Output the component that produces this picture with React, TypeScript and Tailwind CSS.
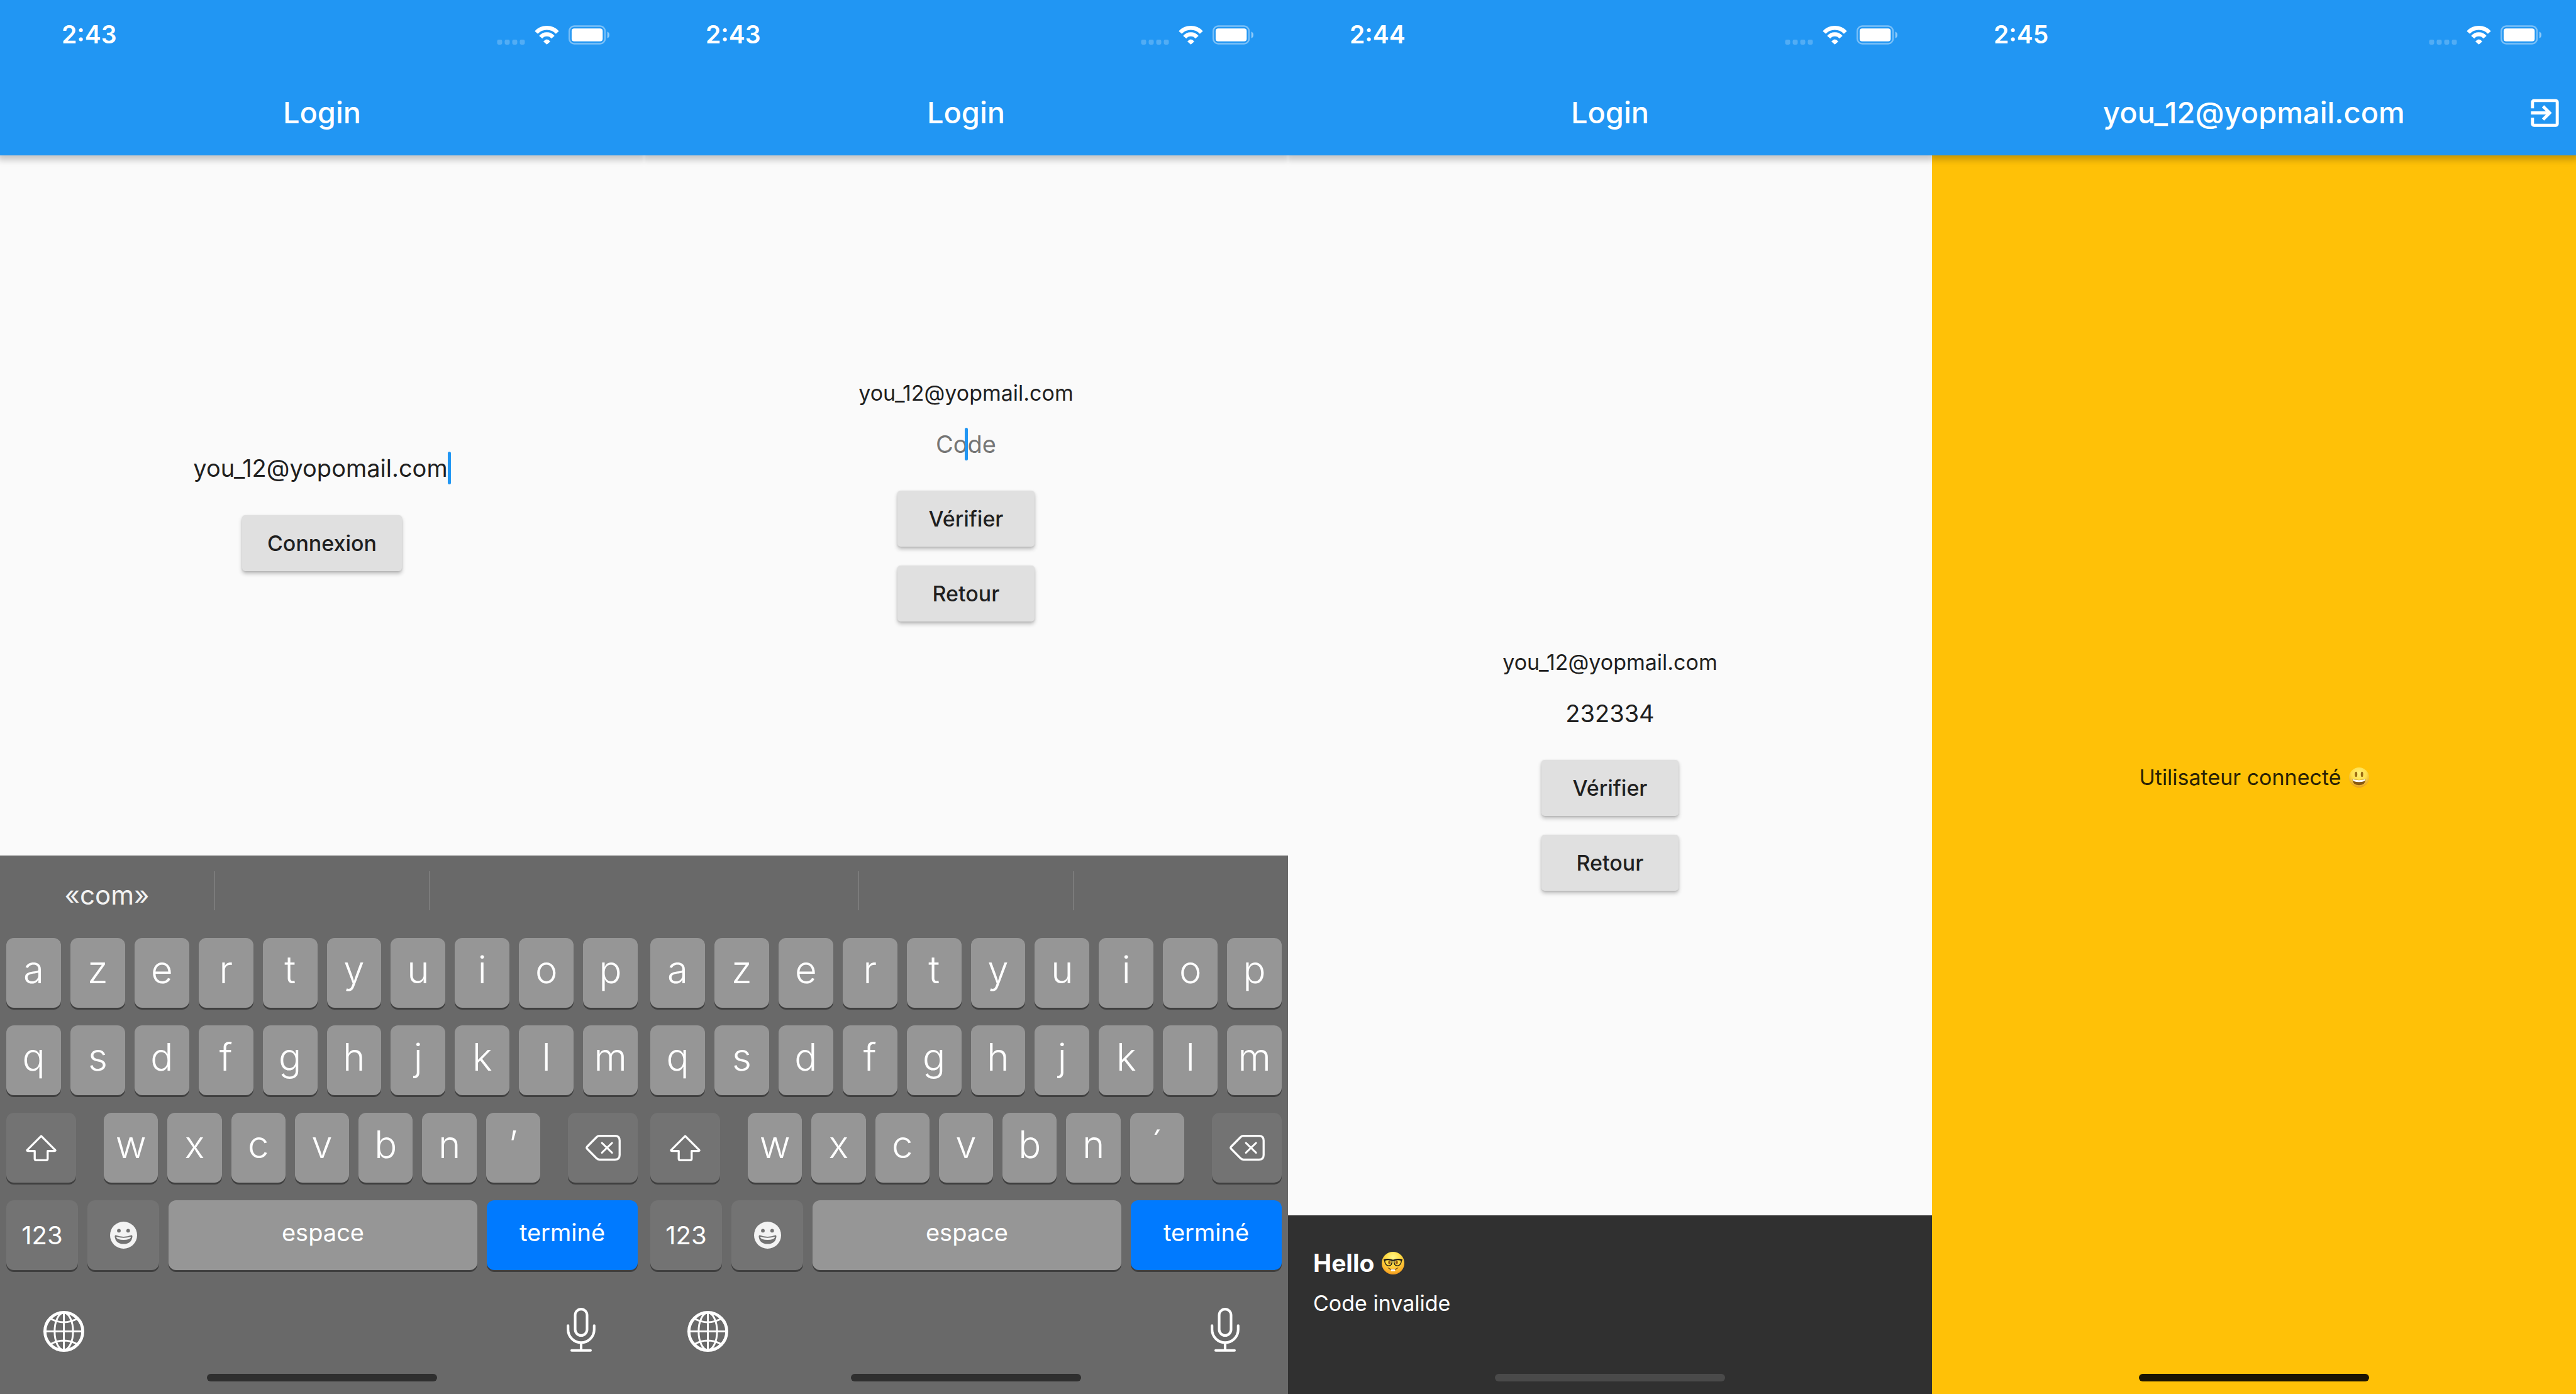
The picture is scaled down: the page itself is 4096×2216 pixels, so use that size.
import type { ReactNode } from "react";

function StatusIcons() {
  return (
    <div className="flex items-end gap-[15px]">
      <svg className="h-2 w-[45px]" viewBox="0 0 55 10" aria-hidden="true">
        <g fill="#fff" opacity="0.22">
          <rect x="0" width="10" height="10" rx="3" />
          <rect x="15" width="10" height="10" rx="3" />
          <rect x="30" width="10" height="10" rx="3" />
          <rect x="45" width="10" height="10" rx="3" />
        </g>
      </svg>
      <svg className="h-[30px] w-[39px]" viewBox="0 0 47.6 36.5" aria-hidden="true">
        <g fill="none" stroke="#fff" strokeWidth="8">
          <path d="M3.3 12.9A28 28 0 0 1 44.3 12.9" />
          <path d="M11.9 22.1A15.5 15.5 0 0 1 35.7 22.1" />
        </g>
        <path d="M17 30.6Q23.8 21.6 30.6 30.6L23.8 36.4Z" fill="#fff" />
      </svg>
      <svg className="h-[31px] w-[65px]" viewBox="0 0 79 37" aria-hidden="true">
        <rect x="1.5" y="1.5" width="69" height="34" rx="9.5" fill="none" stroke="#fff" strokeWidth="3" opacity="0.4" />
        <rect x="6" y="6" width="60" height="25" rx="5" fill="#fff" />
        <path d="M75 12Q79 13.8 79 18.5T75 25Z" fill="#fff" opacity="0.5" />
      </svg>
    </div>
  );
}

function Header({ time, title, action }: { time: string; title: string; action?: ReactNode }) {
  return (
    <header className="relative z-10 bg-[#2196f3] text-white shadow-[0_3px_10px_4px_rgba(0,0,0,0.22)]">
      <div className="flex h-[111px] items-center justify-between pr-[55px] pl-[98px]">
        <time className="text-[39px] font-semibold">{time}</time>
        <StatusIcons />
      </div>
      <div className="grid h-[136px] grid-cols-[100px_1fr_100px] items-center">
        <h1 className="col-start-2 text-center text-[47px] leading-[60px] font-medium">{title}</h1>
        {action}
      </div>
    </header>
  );
}

function LogoutButton() {
  return (
    <button type="button" aria-label="Déconnexion" className="flex h-full items-center justify-center">
      <svg className="h-[59px] w-[59px]" viewBox="0 0 24 24" fill="#fff" aria-hidden="true">
        <path d="M10.09 15.59L11.5 17l5-5-5-5-1.41 1.41L12.67 11H3v2h9.67l-2.58 2.59zM19 3H5c-1.11 0-2 .9-2 2v4h2V5h14v14H5v-4H3v4c0 1.1.89 2 2 2h14c1.1 0 2-.9 2-2V5c0-1.1-.9-2-2-2z" />
      </svg>
    </button>
  );
}

function RaisedButton({ children }: { children: ReactNode }) {
  return (
    <button
      type="button"
      className="my-[15px] h-[89px] min-w-[218px] rounded-[5px] bg-[#e0e0e0] px-10 text-[34px] font-medium shadow-[0_4px_6px_rgba(0,0,0,0.24),0_1px_3px_rgba(0,0,0,0.12)]"
    >
      {children}
    </button>
  );
}

function Caret() {
  return <span className="h-[52px] w-[5px] rounded-full bg-[#2196f3]" />;
}

function HomeIndicator({ className }: { className: string }) {
  return (
    <div className="absolute inset-x-0 bottom-5 z-20 flex justify-center">
      <div className={`h-3 w-[366px] rounded-full ${className}`} />
    </div>
  );
}

function Key({ children, label, className = "" }: { children: ReactNode; label?: string; className?: string }) {
  return (
    <button
      type="button"
      aria-label={label}
      className={`flex h-[111px] items-center justify-center rounded-xl shadow-[0_3px_0_#3f3f3f] ${className}`}
    >
      {children}
    </button>
  );
}

function LetterRow({ letters }: { letters: string[] }) {
  return (
    <div className="flex gap-[15px]">
      {letters.map((letter) => (
        <Key key={letter} className="flex-1 bg-[#969696] pb-3 text-[60px] leading-[72px] font-light">
          {letter}
        </Key>
      ))}
    </div>
  );
}

function Keyboard({ suggestion, accent }: { suggestion: string; accent: string }) {
  return (
    <section aria-label="Clavier" className="bg-[#696969] pb-[67px] text-white">
      <div className="flex h-[131px] pt-[25px]">
        <div className="flex h-[62px] flex-1 items-center justify-center border-r-2 border-[#7b7b7b] pt-3 text-[42px] text-[#f2f2f2]">
          {suggestion}
        </div>
        <div className="h-[62px] flex-1 border-r-2 border-[#7b7b7b]" />
        <div className="h-[62px] flex-1" />
      </div>
      <div className="flex flex-col gap-7 px-[10px]">
        <LetterRow letters={["a", "z", "e", "r", "t", "y", "u", "i", "o", "p"]} />
        <LetterRow letters={["q", "s", "d", "f", "g", "h", "j", "k", "l", "m"]} />
        <div className="flex gap-[44px]">
          <Key label="Majuscule" className="w-[111px] bg-[#737373]">
            <svg className="h-[42px] w-[49px]" viewBox="0 0 59 51" fill="none" stroke="#fff" strokeWidth="4" strokeLinejoin="round" aria-hidden="true">
              <path d="M29.5 2.3L56.5 29.3Q57.6 31 55.5 31H42V46Q42 49 39 49H20Q17 49 17 46V31H3.5Q1.4 31 2.5 29.3Z" />
            </svg>
          </Key>
          <div className="flex-1">
            <LetterRow letters={["w", "x", "c", "v", "b", "n", accent]} />
          </div>
          <Key label="Supprimer" className="w-[111px] bg-[#737373]">
            <svg className="h-[41px] w-[56px]" viewBox="0 0 68 50" fill="none" stroke="#fff" strokeWidth="4" strokeLinejoin="round" strokeLinecap="round" aria-hidden="true">
              <path d="M27 2H57Q66 2 66 11V39Q66 48 57 48H27Q23.8 48 21.5 45.7L2.8 26.8Q1.4 25 2.8 23.2L21.5 4.3Q23.8 2 27 2Z" />
              <path d="M31.7 15.7L51.3 34.6M51.3 15.7L31.7 34.6" strokeWidth="3.6" />
            </svg>
          </Key>
        </div>
        <div className="flex gap-[15px] text-[38px]">
          <Key className="w-[114px] bg-[#737373] text-[40px]">123</Key>
          <Key label="Emoji" className="w-[114px] bg-[#737373]">
            <svg className="h-[43px] w-[43px]" viewBox="0 0 52 52" aria-hidden="true">
              <circle cx="26" cy="26" r="26" fill="#f3f3f3" />
              <circle cx="17" cy="17.4" r="3.5" fill="#737373" />
              <circle cx="34.8" cy="17.4" r="3.5" fill="#737373" />
              <path d="M10.8 26Q26 32 41.2 26Q43 26 43 28.4Q41.5 43 26 43T9 28.4Q9 26 10.8 26Z" fill="#737373" />
              <path d="M12.6 29Q26 33.4 39.4 29Q40.2 28.9 40 30.2Q38 35 26 35T12 30.2Q11.8 28.9 12.6 29Z" fill="#f3f3f3" />
            </svg>
          </Key>
          <Key className="flex-1 bg-[#969696] pb-2">espace</Key>
          <Key className="w-[240px] bg-[#007aff] pb-2">terminé</Key>
        </div>
      </div>
      <div className="mt-[60px] flex items-end justify-between pr-[77px] pl-[69px]">
        <button type="button" aria-label="Changer de clavier">
          <svg className="h-[65px] w-[65px]" viewBox="0 0 79 79" fill="none" stroke="#fff" strokeWidth="3.6" aria-hidden="true">
            <circle cx="39.5" cy="39.5" r="36.6" strokeWidth="5.8" />
            <ellipse cx="39.5" cy="39.5" rx="17.8" ry="36" />
            <path d="M39.5 3V76M3 39.5H76M13 14.5Q39.5 29 66 14.5M13 64.5Q39.5 50 66 64.5" />
          </svg>
        </button>
        <button type="button" aria-label="Dictée">
          <svg className="h-[70px] w-[46px]" viewBox="0 0 56 85" fill="none" stroke="#fff" strokeWidth="5" strokeLinecap="round" aria-hidden="true">
            <rect x="16.5" y="2.5" width="23" height="51" rx="11.5" />
            <path d="M2.7 34.3V42A25.3 25.3 0 0 0 53.3 42V34.3M28 67.5V82M9.8 82.4H46.2" />
          </svg>
        </button>
      </div>
    </section>
  );
}

function CodeForm({ id, value, focused }: { id: string; value?: string; focused?: boolean }) {
  return (
    <form className="flex flex-col items-center">
      <p className="text-[34px] leading-[42px]">you_12@yopmail.com</p>
      <div className="relative flex h-[119px] w-full items-center justify-center">
        <input
          id={id}
          type="text"
          aria-label="Code"
          defaultValue={value}
          placeholder="Code"
          className="h-[72px] w-full bg-transparent text-center text-[38px] leading-[60px] outline-none placeholder:text-[#757575]"
        />
        {focused && (
          <div className="pointer-events-none absolute inset-0 flex items-center justify-center">
            <Caret />
          </div>
        )}
      </div>
      <RaisedButton>Vérifier</RaisedButton>
      <RaisedButton>Retour</RaisedButton>
    </form>
  );
}

function NerdEmoji() {
  return (
    <svg className="h-9 w-9" viewBox="0 0 44 44" role="img" aria-label="Visage à lunettes">
      <defs>
        <radialGradient id="nerd" cx="0.5" cy="0.25" r="0.8">
          <stop offset="0" stopColor="#fff78a" />
          <stop offset="0.4" stopColor="#ffdc45" />
          <stop offset="0.8" stopColor="#fbb02a" />
          <stop offset="1" stopColor="#e68a15" />
        </radialGradient>
      </defs>
      <circle cx="22" cy="22" r="22" fill="url(#nerd)" />
      <ellipse cx="15" cy="20.5" rx="2.4" ry="3.6" fill="#9a5a10" />
      <ellipse cx="29" cy="20.5" rx="2.4" ry="3.6" fill="#9a5a10" />
      <path d="M12 31Q22 37.5 32 31Q22 40 12 31Z" fill="#6b3a0c" stroke="#6b3a0c" strokeWidth="0.8" strokeLinejoin="round" />
      <path d="M18 33.8H26V37Q24 38.4 22 37Q20 38.4 18 37Z" fill="#fff" />
      <path d="M5.5 16.5Q13 13.8 20 16.8Q20.8 27 13.5 27Q6.6 27 5.5 16.5ZM38.5 16.5Q31 13.8 24 16.8Q23.2 27 30.5 27Q37.4 27 38.5 16.5Z" fill="none" stroke="#1c1a17" strokeWidth="1.7" />
      <path d="M3.8 15.6Q13 13.2 22 16.6Q31 13.2 40.2 15.6" fill="none" stroke="#1c1a17" strokeWidth="2.2" />
    </svg>
  );
}

function HappyEmoji() {
  return (
    <svg className="h-8 w-8" viewBox="0 0 38 38" role="img" aria-label="Visage souriant">
      <defs>
        <radialGradient id="happy" cx="0.5" cy="0.3" r="0.75">
          <stop offset="0" stopColor="#fff27c" />
          <stop offset="0.5" stopColor="#ffdd48" />
          <stop offset="1" stopColor="#e2951a" />
        </radialGradient>
      </defs>
      <circle cx="19" cy="19" r="19" fill="url(#happy)" />
      <ellipse cx="13.4" cy="13" rx="2.3" ry="5" fill="#9c6a12" />
      <ellipse cx="24.6" cy="13" rx="2.3" ry="5" fill="#9c6a12" />
      <path d="M6.4 22Q19 25.5 31.6 22Q31 33.4 19 33.4T6.4 22Z" fill="#8a5a10" />
      <path d="M6.6 22.3Q19 25.8 31.4 22.3Q31 27.6 19 27.6T6.6 22.3Z" fill="#fff" />
    </svg>
  );
}

export default function App() {
  return (
    <main className="grid min-h-screen grid-cols-4 font-['Inter','Liberation_Sans',sans-serif] text-[#1f1f1f]">
      <section className="relative flex flex-col overflow-hidden bg-[#fafafa]">
        <Header time="2:43" title="Login" />
        <form className="flex flex-1 flex-col items-center justify-center">
          <div className="flex h-[119px] items-center justify-center">
            <input
              id="email"
              type="text"
              aria-label="Adresse e-mail"
              defaultValue="you_12@yopomail.com"
              className="field-sizing-content h-[72px] bg-transparent text-[38px] leading-[60px] outline-none"
            />
            <Caret />
          </div>
          <RaisedButton>Connexion</RaisedButton>
        </form>
        <Keyboard suggestion="«com»" accent="’" />
        <HomeIndicator className="bg-[#2f2f2f]" />
      </section>

      <section className="relative flex flex-col overflow-hidden bg-[#fafafa]">
        <Header time="2:43" title="Login" />
        <div className="flex flex-1 items-center justify-center">
          <CodeForm id="code-empty" focused />
        </div>
        <Keyboard suggestion="" accent="´" />
        <HomeIndicator className="bg-[#2f2f2f]" />
      </section>

      <section className="relative flex flex-col overflow-hidden bg-[#fafafa]">
        <Header time="2:44" title="Login" />
        <div className="flex flex-1 items-center justify-center">
          <CodeForm id="code-filled" value="232334" />
        </div>
        <div role="alert" className="absolute inset-x-0 bottom-0 flex h-[284px] flex-col gap-5 bg-[#303030] px-10 pt-[52px] text-white">
          <div className="flex items-center gap-3 text-[39px] leading-[47px] font-bold">
            <h2>Hello</h2>
            <NerdEmoji />
          </div>
          <p className="text-[34px] leading-[42px]">Code invalide</p>
        </div>
        <HomeIndicator className="bg-[#4a4a4a]" />
      </section>

      <section className="relative flex flex-col overflow-hidden bg-[#ffc107]">
        <Header time="2:45" title="you_12@yopmail.com" action={<LogoutButton />} />
        <div className="flex flex-1 items-center justify-center gap-3 pt-2 text-[34px] text-[#2a2105]">
          <p>Utilisateur connecté</p>
          <HappyEmoji />
        </div>
        <HomeIndicator className="bg-[#1a1303]" />
      </section>
    </main>
  );
}
